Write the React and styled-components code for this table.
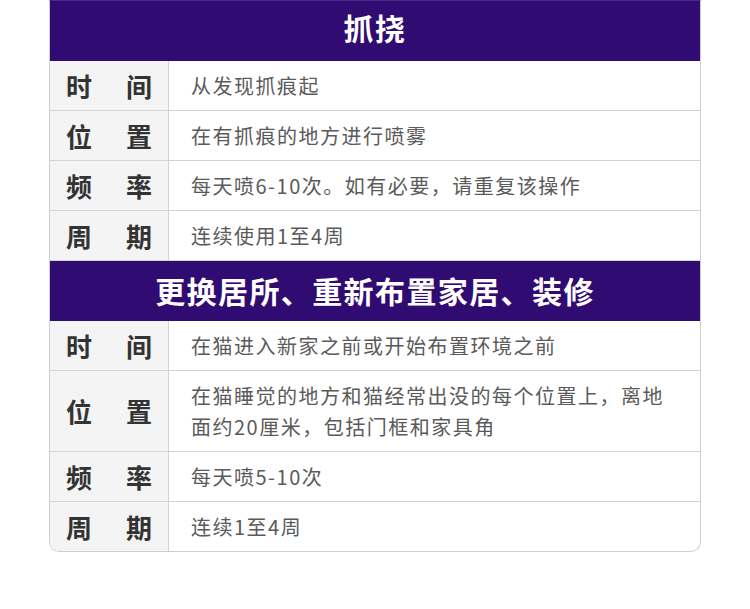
import React from "react";
import styled, { createGlobalStyle } from "styled-components";

const sections = [
    {
        title: "抓挠",
        rows: [
            { label: ["时", "间"], text: "从发现抓痕起" },
            { label: ["位", "置"], text: "在有抓痕的地方进行喷雾" },
            { label: ["频", "率"], text: "每天喷6-10次。如有必要，请重复该操作" },
            { label: ["周", "期"], text: "连续使用1至4周" },
        ],
    },
    {
        title: "更换居所、重新布置家居、装修",
        rows: [
            { label: ["时", "间"], text: "在猫进入新家之前或开始布置环境之前" },
            {
                label: ["位", "置"],
                text: "在猫睡觉的地方和猫经常出没的每个位置上，离地面约20厘米，包括门框和家具角",
            },
            { label: ["频", "率"], text: "每天喷5-10次" },
            { label: ["周", "期"], text: "连续1至4周" },
        ],
    },
];

const App = () => (
    <>
        <GlobalStyle />
        <Page>
            <Card>
                {sections.map((section, index) => (
                    <Section key={section.title}>
                        <Header $top={index === 0}>{section.title}</Header>
                        {section.rows.map((row) => (
                            <Row key={row.text}>
                                <Label>
                                    <span>{row.label[0]}</span>
                                    <span>{row.label[1]}</span>
                                </Label>
                                <Content>{row.text}</Content>
                            </Row>
                        ))}
                    </Section>
                ))}
            </Card>
        </Page>
    </>
);

const GlobalStyle = createGlobalStyle`
    body {
        margin: 0;
        background: #ffffff;
        font-family: "Noto Sans CJK SC", "Noto Sans", sans-serif;
    }
`;

const Page = styled.div`
    width: 750px;
    height: 609px;
    background: #ffffff;
`;

const Card = styled.div`
    width: 650px;
    margin: 0 auto;
    border: 1px solid #cfcfcf;
    border-top-color: #4a2a85;
    border-radius: 0 0 10px 10px;
    overflow: hidden;
`;

const Section = styled.div`
    display: flex;
    flex-direction: column;
`;

const Header = styled.div`
    height: 60px;
    display: flex;
    align-items: center;
    justify-content: center;
    background: #300b72;
    color: #ffffff;
    font-size: 30px;
    line-height: 1;
    font-weight: 700;
    letter-spacing: 1.4px;
    padding-bottom: ${({ $top }) => ($top ? "9px" : "2px")};
    box-sizing: border-box;
`;

const Row = styled.div`
    display: grid;
    grid-template-columns: 119px 1fr;
    min-height: 49px;
    border-bottom: 1px solid #d3d3d3;

    ${Section}:last-child &:last-child {
        border-bottom: none;
    }
`;

const Label = styled.div`
    display: flex;
    align-items: center;
    justify-content: space-between;
    padding: 0 16px;
    background: #f4f4f4;
    border-right: 1px solid #d3d3d3;
    color: #333333;
    font-size: 26px;
    line-height: 1;
    font-weight: 700;
`;

const Content = styled.div`
    display: flex;
    align-items: center;
    padding: 9px 20px 9px 22px;
    color: #5a5a5a;
    font-size: 20px;
    line-height: 31px;
    letter-spacing: 1.5px;
`;

export default App;
